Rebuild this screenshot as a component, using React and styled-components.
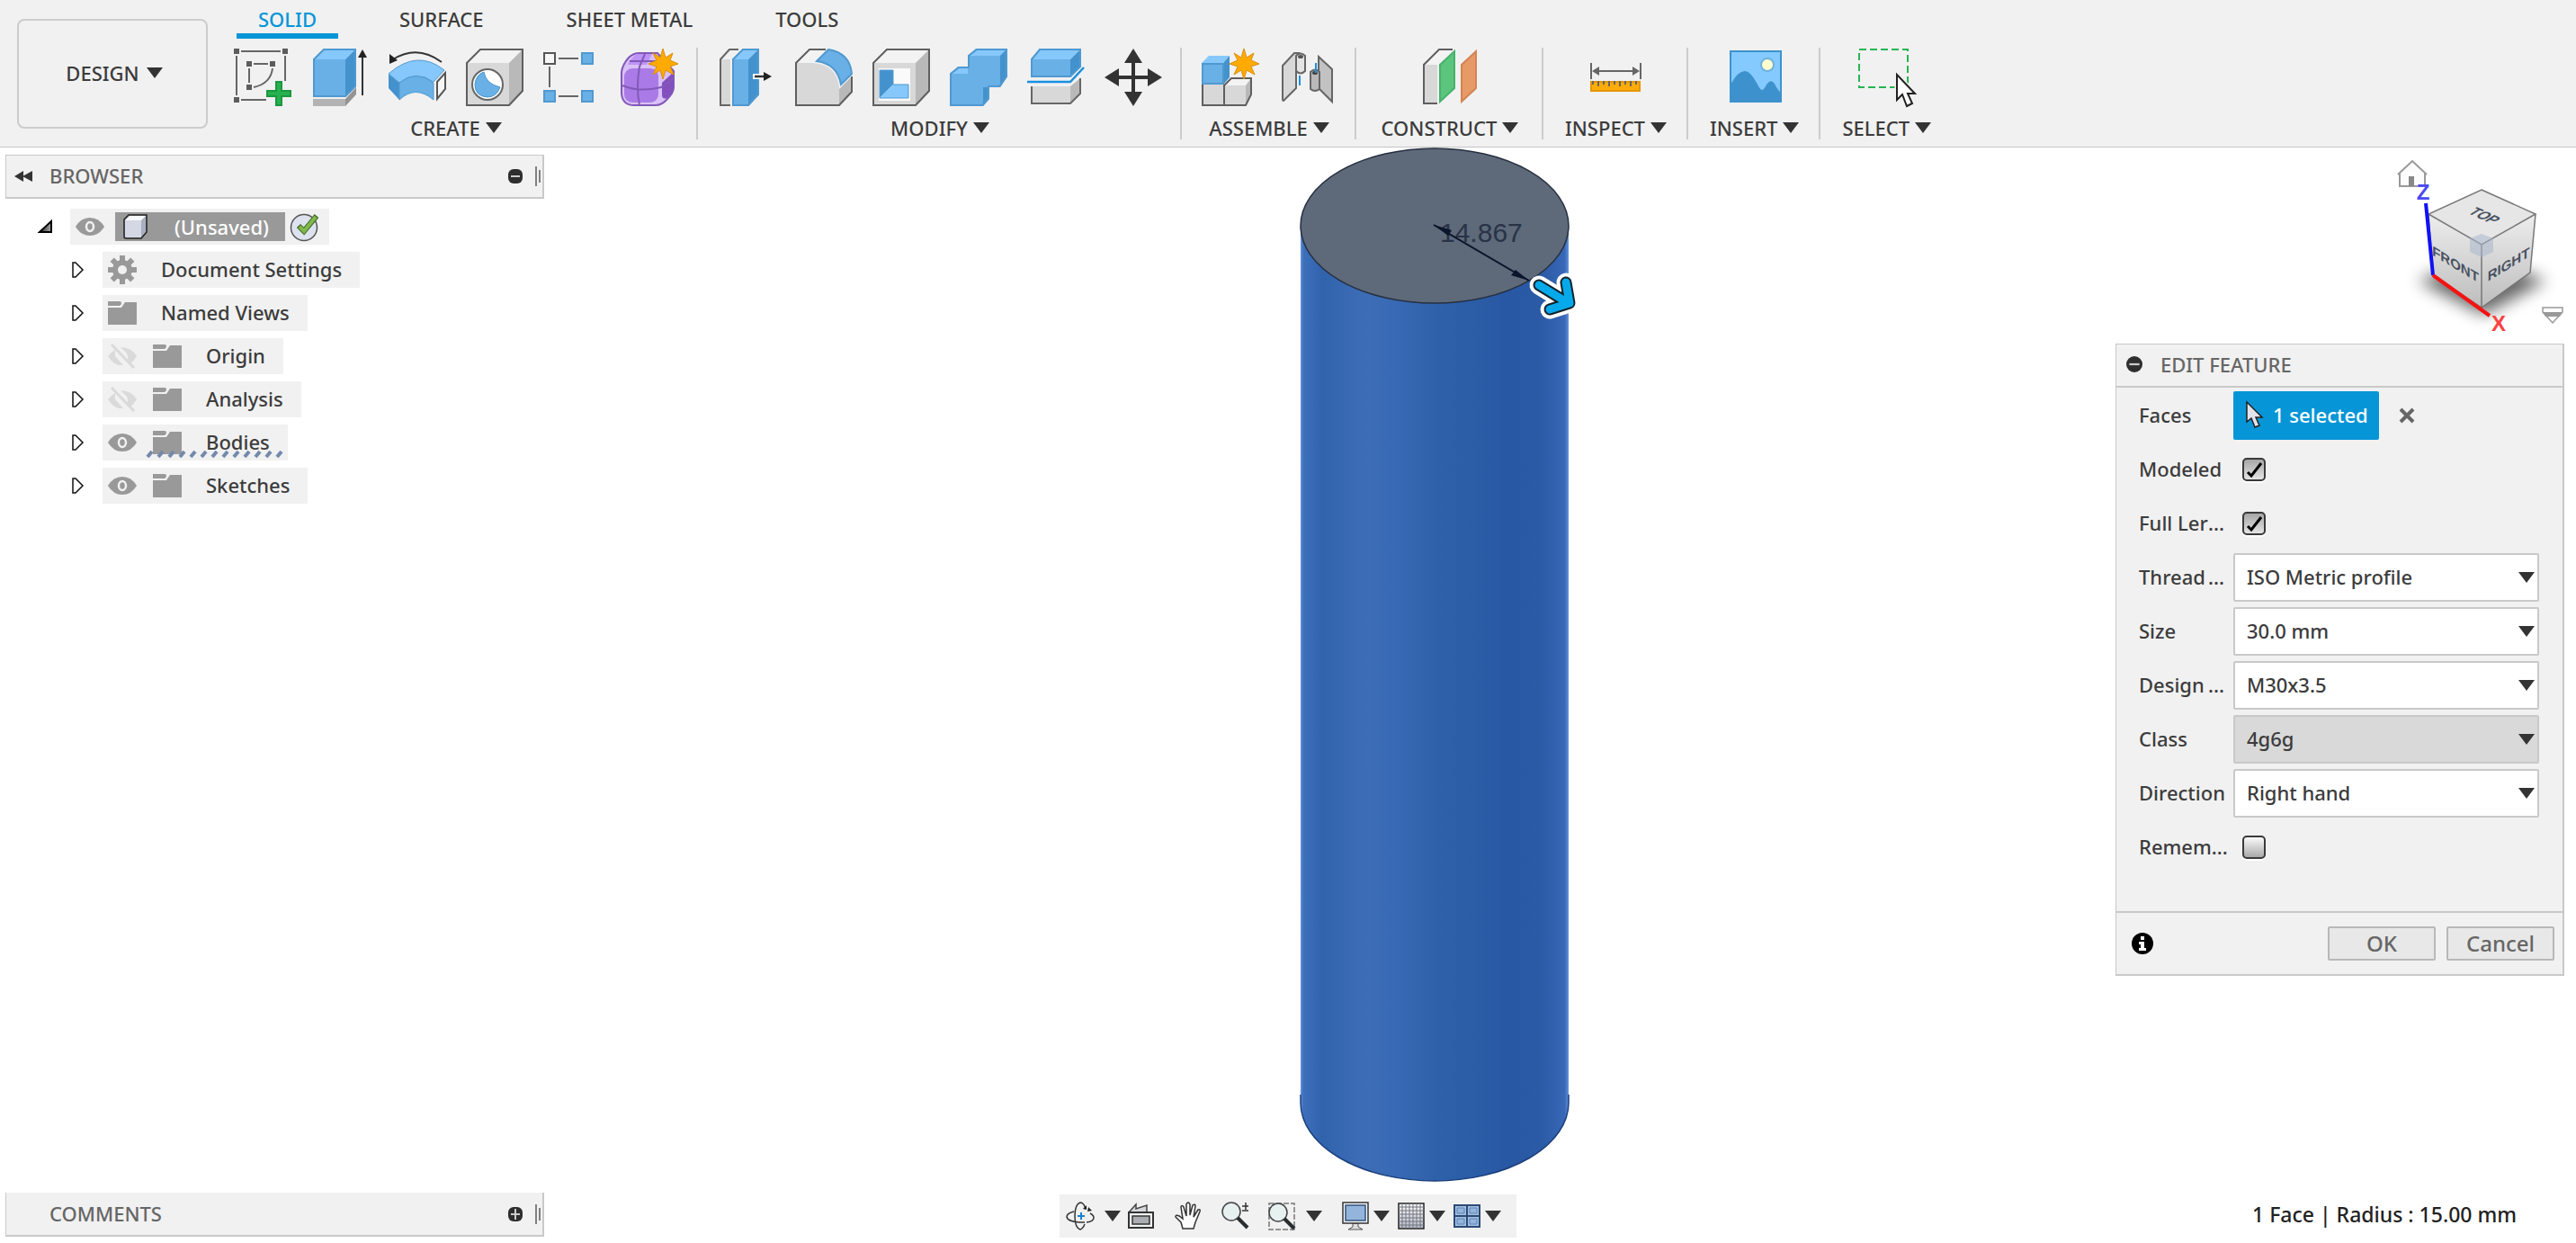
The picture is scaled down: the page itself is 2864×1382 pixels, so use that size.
import React from "react";
import styled, { createGlobalStyle } from "styled-components";

const GlobalStyle = createGlobalStyle`
  * {
    box-sizing: border-box;
  }
  body {
    margin: 0;
    background: #fff;
    color: #3c3c3c;
    font-family: "Noto Sans", "Open Sans", sans-serif;
    font-size: 22px;
    font-weight: 500;
    line-height: 28px;
  }
  button, select, input {
    margin: 0;
    padding: 0;
    color: inherit;
    font: inherit;
  }
  svg {
    display: block;
    overflow: visible;
    flex: none;
  }
`;

const Page = styled.div`
  display: flex;
  flex-direction: column;
  min-height: 100vh;
`;

/* toolbar */

const Toolbar = styled.header`
  display: flex;
  background: #f1f1f1;
  border-bottom: 1px solid #c4c4c4;
`;

const DesignButton = styled.button`
  display: flex;
  align-items: center;
  justify-content: center;
  gap: 8px;
  width: 212px;
  height: 122px;
  margin: 21px 7px 0 19px;
  padding: 0 0 2px 4px;
  background: transparent;
  border: 2px solid #ccc;
  border-radius: 8px;
`;

const Ribbon = styled.div`
  display: flex;
  flex-direction: column;
  padding-bottom: 8px;
`;

const Tabs = styled.nav`
  display: flex;
  gap: 44px;
  padding-left: 25px;
`;

const Tab = styled.button`
  padding: 6px 24px 0;
  line-height: 31px;
  background: transparent;
  border: 0;
  border-bottom: 6px solid ${props => (props.$active ? "#0696d7" : "transparent")};
  color: ${props => (props.$active ? "#0696d7" : "#3c3c3c")};
`;

const Groups = styled.div`
  display: flex;
  margin-top: 10px;
`;

const Group = styled.section`
  display: flex;
  flex-direction: column;
  align-items: center;
  min-width: ${props => props.$min || 0}px;
  padding: 1px 20px 0 22px;
  border-right: 2px solid #ccc;

  &:last-child {
    border-right: 0;
  }
`;

const GroupIcons = styled.div`
  display: flex;
  gap: 22px;
`;

const PlainButton = styled.button`
  display: flex;
  background: transparent;
  border: 0;
`;

const GroupLabel = styled.button`
  display: flex;
  align-items: center;
  gap: 6px;
  margin-top: 11px;
  padding: 0 2px;
  line-height: 26px;
  background: transparent;
  border: 0;
`;

/* workspace */

const Workspace = styled.main`
  position: relative;
  isolation: isolate;
  flex: 1;
  display: grid;
  grid-template-columns: 1fr auto 1fr;
`;

const Viewport = styled.svg`
  position: absolute;
  inset: 0;
  z-index: -1;
  width: 100%;
  height: 100%;
`;

const LeftColumn = styled.div`
  display: flex;
  flex-direction: column;
  justify-content: space-between;
  width: 605px;
  padding: 8px 0 7px 6px;
`;

const PanelHeader = styled.div`
  display: flex;
  align-items: center;
  height: 49px;
  padding: 0 2px 0 9px;
  background: #f1f1f1;
  border: solid #c9c9c9;
  border-width: ${props => (props.$open ? "0" : "1px")} 2px 2px 1px;
  color: #666;
`;

const PanelTitle = styled.span`
  flex: 1;
  margin-left: ${props => (props.$indent ? "39px" : "19px")};
  padding-bottom: 2px;
`;

const Grip = styled.span`
  display: flex;
  align-items: center;
  gap: 2px;
  margin-left: 14px;

  &::before, &::after {
    content: "";
    width: 2px;
    height: 22px;
    background: #808080;
  }
  &::after {
    height: 14px;
  }
`;

const Tree = styled.ul`
  display: flex;
  flex-direction: column;
  gap: 8px;
  margin: 11px 0 0;
  padding: 0;
  list-style: none;
`;

const TreeRow = styled.li`
  display: flex;
  align-items: center;
  gap: 20px;
  height: 40px;
  padding-left: ${props => (props.$root ? "37px" : "74px")};
`;

const TreeNode = styled.div`
  position: relative;
  display: flex;
  align-items: center;
  height: 40px;
  padding: 0 20px 0 6px;
  background: #f1f1f1;
`;

const TreeName = styled.span`
  margin-left: 27px;
  padding-bottom: 2px;
`;

const FolderSlot = styled.span`
  margin-left: ${props => (props.$first ? "0" : "18px")};
`;

const Hatch = styled.svg`
  position: absolute;
  left: 48px;
  bottom: 3px;
`;

const RootNode = styled(TreeNode)`
  padding-right: 12px;
`;

const RootName = styled.span`
  display: flex;
  align-items: center;
  gap: 30px;
  height: 32px;
  margin: 0 5px 0 12px;
  padding: 0 18px 0 9px;
  background: #999;
  color: #fff;
`;

const NavBar = styled.nav`
  align-self: end;
  display: flex;
  align-items: center;
  height: 48px;
  margin-bottom: 6px;
  padding: 0 17px 0 8px;
  background: #f1f1f1;
`;

const NavButton = styled(PlainButton)`
  margin-left: ${props => props.$gap || 0}px;
`;

const RightColumn = styled.div`
  display: flex;
  flex-direction: column;
  align-items: flex-end;
  padding: 8px 13px 18px 0;
`;

const CubeSlot = styled.div`
  margin: 0 -9px 10px 0;
`;

const Status = styled.p`
  margin: auto 53px 0 0;
  color: #222;
  font-size: 23px;
`;

/* edit feature dialog */

const Dialog = styled.form`
  width: 499px;
  background: #f1f1f1;
  border: 2px solid #c9c9c9;
  border-left-width: 1px;
  border-top-width: 1px;
`;

const DialogHeader = styled.header`
  display: flex;
  align-items: center;
  gap: 20px;
  height: 48px;
  padding: 0 0 2px 11px;
  border-bottom: 2px solid #c9c9c9;
  color: #666;
`;

const Fields = styled.div`
  display: grid;
  grid-auto-rows: 54px;
  gap: 6px;
  padding: 4px 26px 44px 25px;
`;

const Field = styled.div`
  display: grid;
  grid-template-columns: 105px 1fr;
  align-items: center;
`;

const FieldLabel = styled.label`
  display: flex;
  padding-bottom: 2px;
  white-space: nowrap;
`;

const ShortText = styled.span`
  min-width: 77px;
`;

const Selection = styled.div`
  display: flex;
  align-items: center;
  gap: 22px;
`;

const SelectionButton = styled.button`
  display: flex;
  align-items: center;
  gap: 12px;
  height: 54px;
  padding: 0 12px 2px 14px;
  background: #0696d7;
  border: 0;
  border-radius: 2px;
  color: #fff;
`;

const Overlay = styled.div`
  display: grid;
  align-items: center;

  > * {
    grid-area: 1 / 1;
  }
  > svg {
    pointer-events: none;
  }
`;

const SelectOverlay = styled(Overlay)`
  > svg {
    justify-self: end;
    margin-right: 5px;
  }
`;

const Select = styled.select`
  appearance: none;
  width: 100%;
  height: 54px;
  padding: 0 28px 2px 13px;
  background: ${props => (props.disabled ? "#d9d9d9" : "#fff")};
  border: 2px solid #c9c9c9;
  border-radius: 2px;
  opacity: 1;
`;

const CheckOverlay = styled(Overlay)`
  justify-content: start;
  margin-left: 10px;
`;

const Checkbox = styled.input`
  appearance: none;
  width: 26px;
  height: 26px;
  background: linear-gradient(#fafafa, #a9a9a9);
  border: 2px solid #3a3a3a;
  border-radius: 5px;
  box-shadow: 0 2px 0 #fff;

  &:checked {
    background: linear-gradient(#a6a6a6, #e4e4e4);
  }
`;

const DialogFooter = styled.footer`
  display: flex;
  align-items: center;
  gap: 12px;
  height: 70px;
  padding: 0 9px 0 17px;
  border-top: 2px solid #c9c9c9;
`;

const InfoSlot = styled.span`
  flex: 1;
`;

const ActionButton = styled.button`
  width: 120px;
  height: 38px;
  background: #e8e8e8;
  border: 2px solid #b8b8b8;
  border-radius: 2px;
  color: #666;
  font-size: 24px;
  line-height: 32px;
`;

/* small marks */

const Caret = () => (
  <svg width="18" height="12" viewBox="0 0 18 12">
    <path d="M0 0h18L9 12z" fill="#333" />
  </svg>
);

const RoundMark = ({ plus, size = 16 }) => (
  <svg width={size} height={size} viewBox="0 0 16 16">
    <rect width="16" height="16" rx={size > 16 ? 8 : 6} fill="#2e2e2e" />
    <path d={plus ? "M3 8h10M8 2v12" : "M3 8h10"} stroke="#ccc" strokeWidth="2" />
  </svg>
);

const Rewind = () => (
  <svg width="20" height="12" viewBox="0 0 20 12">
    <path d="M0 6l10-6v12zM9 6l11-6v12z" fill="#333" />
  </svg>
);

const Eye = ({ off }) => (
  <svg width="32" height="26" viewBox="0 0 32 26">
    {off ? (
      <g fill="none" stroke="#dadada">
        <path d="M8 6Q3 9 0 13q5 8 12 10h5L8 13z" fill="#dadada" stroke="none" />
        <path d="M14 3q12 0 18 10-3 5-7 8l-3-4q1-7-4-10z" fill="#dadada" stroke="none" />
        <path d="M4 0l25 26" strokeWidth="3" />
      </g>
    ) : (
      <g>
        <path d="M0 13Q6 3 16 3t16 10q-6 10-16 10T0 13z" fill="#999" />
        <ellipse cx="16" cy="13" rx="4" ry="5" fill="none" stroke="#f1f1f1" strokeWidth="2.500" />
      </g>
    )}
  </svg>
);

const Folder = () => (
  <svg width="32" height="26" viewBox="0 0 32 26">
    <path d="M0 0h13q2 0 2 2t-2 3H0zM0 7h15l4-6h13v25H0z" fill="#999" />
  </svg>
);

const Gear = () => (
  <svg width="32" height="32" viewBox="0 0 32 32">
    <g fill="#999">
      {[0, 45, 90, 135].map(angle => (
        <rect key={angle} x="13" y="0" width="6" height="32" transform={`rotate(${angle} 16 16)`} />
      ))}
      <circle cx="16" cy="16" r="11" />
    </g>
    <circle cx="16" cy="16" r="5" fill="#f1f1f1" />
  </svg>
);

const Expander = () => (
  <svg width="14" height="18" viewBox="0 0 14 18">
    <path d="M1 1h3l8 8-8 8H1z" fill="#fff" stroke="#111" strokeWidth="1.500" />
  </svg>
);

const Collapser = () => (
  <svg width="15" height="14" viewBox="0 0 15 14">
    <defs>
      <linearGradient id="collapse">
        <stop stopColor="#222" />
        <stop offset="1" stopColor="#aaa" />
      </linearGradient>
    </defs>
    <path d="M1 13L14 1v12z" fill="url(#collapse)" stroke="#000" strokeWidth="2" />
  </svg>
);

const Component = () => (
  <svg width="27" height="28" viewBox="0 0 27 28">
    <path d="M1 6l5-5h20v19l-6 7H3q-2 0-2-2z" fill="#aab0c0" stroke="#222" strokeWidth="1.500" />
    <path d="M2 7h18v19H4q-2 0-2-2z" fill="#d4d8e4" />
    <path d="M2 7l5-5h18l-5 5z" fill="#f8f9fc" />
  </svg>
);

const Saved = () => (
  <svg width="32" height="32" viewBox="0 0 32 32">
    <circle cx="16" cy="17" r="14.500" fill="#dde2ee" stroke="#555" strokeWidth="1.500" />
    <path d="M10 15l6 6L30 4" fill="none" stroke="#3f6b25" strokeWidth="6" />
    <path d="M11 16l5 5L29 5" fill="none" stroke="#82b84c" strokeWidth="4" />
  </svg>
);

/* toolbar icons */

const Icon = ({ children }) => (
  <svg width="64" height="64" viewBox="0 0 64 64" fill="none">
    {children}
  </svg>
);

const Star = () => (
  <path
    d="M47 0l3 10 8-5-3 8 9 4-9 3 4 9-9-5-3 10-3-10-8 5 4-9-9-3 9-4-4-8 8 5z"
    fill="#ffaa00"
    stroke="#d98f0c"
  />
);

const SketchIcon = () => (
  <Icon>
    <path d="M0 0h6v6H0zM54 0h6v6h-6zM0 54h6v6H0zM14 14h6v6h-6zM40 14h6v6h-6zM14 40h6v6h-6z" fill="#5c5c5c" />
    <path d="M8 3h44M3 8v44M57 8v28M8 57h28M22 17h16M17 22v16M43 22Q41 39 22 43" stroke="#666" strokeWidth="2" />
    <path d="M47 37h6v10h10v6H53v10h-6V53H37v-6h10z" fill="#27b14f" stroke="#1c9740" strokeWidth="2" />
  </Icon>
);

const ExtrudeIcon = () => (
  <Icon>
    <path d="M2 56h36v8H2z" fill="#b3b3b3" />
    <path d="M38 56l12-13v8L38 64z" fill="#949494" />
    <path d="M2 12L14 0h36L38 12z" fill="#86c8fb" />
    <path d="M38 12L50 0v42L38 54z" fill="#4492cd" />
    <path d="M2 12h36v42H2z" fill="#69b0e6" />
    <path d="M3 12L14 1h35v41L38 53H3z" stroke="#5099d0" strokeWidth="2" />
    <path d="M57 52V8" stroke="#333" strokeWidth="2" />
    <path d="M57 1l5 9H52z" fill="#222" />
  </Icon>
);

const RevolveIcon = () => (
  <Icon>
    <path d="M0 28l12 10v19L0 44z" fill="#4492cd" />
    <path d="M0 28Q32 0 62 24L50 37q-20-14-38 1z" fill="#86c8fb" stroke="#5099d0" />
    <path d="M12 38q18-15 38 0v19q-20-17-38 0z" fill="#69b0e6" stroke="#5099d0" />
    <path d="M54 37l9-10v18l-9 11z" fill="#f6f6f6" stroke="#555" strokeWidth="2" />
    <path d="M59 15Q32-5 5 12" stroke="#333" strokeWidth="2" />
    <path d="M1 17V6l9 7z" fill="#222" />
  </Icon>
);

const GreyCube = () => (
  <g>
    <path d="M1 16L16 1h47L48 16z" fill="#f3f3f3" />
    <path d="M48 16L63 1v46L48 63z" fill="#b9b9b9" />
    <path d="M1 16h47v47H1z" fill="#d8d8d8" />
    <path d="M1 16L16 1h47v46L48 63H1z" stroke="#5f5f5f" strokeWidth="2" />
  </g>
);

const HoleIcon = () => (
  <Icon>
    <GreyCube />
    <circle cx="24" cy="40" r="17" fill="#fff" stroke="#666" strokeWidth="2" />
    <path d="M20 26q2 13 18 17-4 11-14 11-14-1-14-14 1-11 10-14z" fill="#69b0e6" stroke="#4b94cb" />
  </Icon>
);

const PatternIcon = () => (
  <Icon>
    <path d="M1 5h12v12H1z" fill="#f6f6f6" stroke="#555" strokeWidth="2" />
    <path d="M43 5h12v12H43zM1 47h12v12H1zM43 47h12v12H43z" fill="#69b0e6" stroke="#5099d0" strokeWidth="2" />
    <path d="M17 11h22M7 20v23M17 53h22" stroke="#666" strokeWidth="2" />
  </Icon>
);

const FormIcon = () => (
  <Icon>
    <path d="M1 26Q2 18 9 10q5-5 12-5h20l18 20v18q0 6-7 13-6 7-13 7H15Q2 63 1 50z" fill="#d9c0f6" stroke="#8259b8" strokeWidth="2" />
    <path d="M9 15l8-9h18l-6 12H8z" fill="#be93f8" />
    <rect x="4" y="22" width="38" height="38" rx="9" fill="#aa7be6" />
    <path d="M46 38l13-12v18q0 6-7 11-6 2-6-4z" fill="#8450bd" />
    <path d="M2 41q18 8 43 2 8-4 14-10M21 63q-4-20 0-43l6-14M10 14h30" stroke="#8259b8" strokeWidth="2" />
    <Star />
  </Icon>
);

const PressPullIcon = () => (
  <Icon>
    <path d="M14 12H3v51h11z" fill="#d8d8d8" />
    <path d="M14 63H3V12L13 1h10" stroke="#666" strokeWidth="2" />
    <path d="M16 12L28 0h18L34 12z" fill="#86c8fb" />
    <path d="M34 12L46 0v51L34 64z" fill="#4492cd" />
    <path d="M16 12h18v52H16z" fill="#69b0e6" />
    <path d="M17 12L28 1h17v50L34 63H17z" stroke="#5099d0" strokeWidth="2" />
    <path d="M39 31h14" stroke="#fff" strokeWidth="6" />
    <path d="M41 31h12" stroke="#333" strokeWidth="2.500" />
    <path d="M60 31l-9-5v10z" fill="#222" />
  </Icon>
);

const FilletIcon = () => (
  <Icon>
    <path d="M1 16L16 1h18L22 16z" fill="#f3f3f3" />
    <path d="M1 16h19q27 2 29 28v19H1z" fill="#d8d8d8" />
    <path d="M49 45l14-14v17L49 63z" fill="#b9b9b9" />
    <path d="M34 1H16L1 16v47h48l14-15V31" stroke="#5f5f5f" strokeWidth="2" />
    <path d="M24 14L37 1q24 4 26 27L51 40Q47 17 24 14z" fill="#69b0e6" stroke="#5099d0" strokeWidth="2" />
  </Icon>
);

const ShellIcon = () => (
  <Icon>
    <GreyCube />
    <path d="M7 22h35v36H7z" fill="#fafafa" />
    <path d="M8 24h15v16L8 55z" fill="#4492cd" />
    <path d="M23 40h17v15H8z" fill="#86c8fb" />
    <path d="M23 24H8v31h32V40H23z" stroke="#5099d0" />
  </Icon>
);

const CombineIcon = () => (
  <Icon>
    <path d="M0 28l9-8h11V8l9-8h35v31L56 43H44v13l-7 8H0z" fill="#69b0e6" />
    <path d="M0 28l9-8h11v8zM20 8l9-8h35l-8 8z" fill="#86c8fb" />
    <path d="M56 8l8-8v31l-8 12zM37 43h7v13l-7 8z" fill="#4492cd" />
    <path d="M1 28l9-7h11V8l9-7h33v30l-8 11H43v13l-7 8H1z" stroke="#5099d0" strokeWidth="2" />
  </Icon>
);

const SplitIcon = () => (
  <Icon>
    <path d="M4 12L14 0h46L48 12z" fill="#86c8fb" />
    <path d="M48 12L60 0v20L48 32z" fill="#4492cd" />
    <path d="M4 12h44v20H4z" fill="#69b0e6" />
    <path d="M5 12L14 1h45v19L48 31H5z" stroke="#5099d0" strokeWidth="2" />
    <path d="M0 37h48l15-16" stroke="#1a90de" strokeWidth="2.500" />
    <path d="M5 42h43v19H5z" fill="#d8d8d8" />
    <path d="M48 42l11-9v17L48 61z" fill="#b9b9b9" />
    <path d="M5 42v19h43l11-11V33" stroke="#666" strokeWidth="2" />
  </Icon>
);

const MoveIcon = () => (
  <Icon>
    <path d="M32 10v44M10 32h44" stroke="#333" strokeWidth="4" />
    <path d="M32 0l10 16H22zM32 64l10-16H22zM0 32l16-10v20zM64 32L48 22v20z" fill="#333" />
  </Icon>
);

const ComponentIcon = () => (
  <Icon>
    <path d="M1 40h48v23H1z" fill="#d8d8d8" />
    <path d="M25 41l8-8h22l-6 8z" fill="#f3f3f3" />
    <path d="M49 41l6-8v18l-6 12z" fill="#b9b9b9" />
    <path d="M1 40v23h48l6-12V33H33l-8 8v22" stroke="#5f5f5f" strokeWidth="2" />
    <path d="M0 16l8-8h23l-7 8z" fill="#86c8fb" />
    <path d="M24 16l7-8v24l-7 8z" fill="#4492cd" />
    <path d="M1 17h23v22H1z" fill="#69b0e6" stroke="#5099d0" strokeWidth="2" />
    <Star />
  </Icon>
);

const JointIcon = () => (
  <Icon>
    <path d="M4 19L17 5h5l-3 6v33L5 58q-1 0-1-2z" fill="#d8d8d8" stroke="#666" strokeWidth="2" />
    <path d="M19 8q5-5 10 0v17q-5 5-10 0z" fill="#e4e4e4" stroke="#666" strokeWidth="2" />
    <ellipse cx="24" cy="9" rx="3" ry="2" fill="#555" />
    <path d="M23 30v11" stroke="#1a90de" strokeWidth="2" />
    <path d="M44 9l15 14v36L44 44z" fill="#c2c2c2" stroke="#666" strokeWidth="2" />
    <path d="M35 26q5-5 10 0v19q-5 4-10 0z" fill="#b9b9b9" stroke="#666" strokeWidth="2" />
    <ellipse cx="40" cy="27" rx="3" ry="2" fill="#444" />
    <path d="M41 16v11" stroke="#1a90de" strokeWidth="2" />
  </Icon>
);

const ConstructIcon = () => (
  <Icon>
    <path d="M3 18L20 1h15L19 18z" fill="#f3f3f3" />
    <path d="M3 18h15v43H3z" fill="#d8d8d8" />
    <path d="M18 61H3V18L20 1h15" stroke="#5f5f5f" strokeWidth="2" />
    <path d="M21 18L37 3v41L21 59z" fill="#5bc57e" stroke="#48b16c" strokeWidth="2" />
    <path d="M45 18L61 3v41L45 59z" fill="#e79a66" stroke="#d18553" strokeWidth="2" />
  </Icon>
);

const InspectIcon = () => (
  <Icon>
    <path d="M5 16v18M60 16v18M12 25h42" stroke="#666" strokeWidth="2" />
    <path d="M6 25l8-5v10zM59 25l-8-5v10z" fill="#666" />
    <path d="M5 37h54v10H5z" fill="#ffab0a" stroke="#e69500" strokeWidth="2" />
    <path d="M7 36v4M13 36v6M19 36v4M25 36v6M31 36v4M37 36v6M43 36v4M49 36v6M55 36v4" stroke="#666" strokeWidth="2" />
  </Icon>
);

const InsertIcon = () => (
  <Icon>
    <path d="M5 3h56v56H5z" fill="#85caff" />
    <path d="M5 40q8-15 16-15 6 0 13 13 4 8 6 8t5-6q6-9 11 3l5 7v10H5z" fill="#3d92cd" />
    <path d="M5 3h56v56H5z" stroke="#3d92cd" strokeWidth="2" />
    <circle cx="46" cy="18" r="7" fill="#ffffcf" stroke="#6fb0dd" strokeWidth="2" />
  </Icon>
);

const SelectIcon = () => (
  <Icon>
    <path d="M1 1h54v42H1z" stroke="#27b552" strokeWidth="2" strokeDasharray="8 4" />
    <path d="M43 29v28l6-6 5 13 6-3-5-11h8z" fill="#fff" stroke="#f1f1f1" strokeWidth="5" />
    <path d="M43 29v28l6-6 5 13 6-3-5-11h8z" fill="#fff" stroke="#222" strokeWidth="2" />
  </Icon>
);

/* navigation icons */

const NavIcon = ({ children }) => (
  <svg width="30" height="32" viewBox="0 0 30 32" fill="none">
    {children}
  </svg>
);

const OrbitIcon = () => (
  <NavIcon>
    <path d="M8 11q-8 2-8 6 1 5 14 6h6M26 13q4 2 4 5 0 4-8 5" stroke="#333" strokeWidth="1.500" />
    <path d="M21 8Q19 1 15 1 9 3 9 16t6 15q3-1 5-6" stroke="#333" strokeWidth="1.500" />
    <path d="M16 12v8M12 16h8" stroke="#1a80d0" strokeWidth="2" />
    <path d="M18 8l4-4v5zM23 11l1-5 4 4z" fill="#222" />
  </NavIcon>
);

const LookAtIcon = () => (
  <NavIcon>
    <path d="M1 12l8-9v5l12-4v8" fill="#d6d9dc" stroke="#444" strokeWidth="1.500" />
    <path d="M1 12h27v17H1z" fill="#f2f4f6" stroke="#333" strokeWidth="2" />
    <path d="M5 16h19v9H5z" fill="#aaadb2" stroke="#333" strokeWidth="1.500" />
  </NavIcon>
);

const HandIcon = () => (
  <NavIcon>
    <path
      d="M9 30l-2-7-6-6q0-3 4-1l4 3-2-13q1-3 3 0l3 10V3q2-4 4 0v12l3-11q3-2 3 1l-2 12 5-8q3-1 2 2l-5 12-2 7z"
      fill="#fcfcfc"
      stroke="#333"
      strokeWidth="1.500"
    />
  </NavIcon>
);

const ZoomIcon = () => (
  <NavIcon>
    <circle cx="11" cy="11" r="10" fill="#e6f1f0" stroke="#444" strokeWidth="1.500" />
    <path d="M18 18l11 11" stroke="#2a2d30" strokeWidth="4" />
    <path d="M23 5h7M27 1v8M23 10h7" stroke="#333" strokeWidth="1.500" />
  </NavIcon>
);

const FitIcon = () => (
  <NavIcon>
    <path d="M1 2h28v29H1z" stroke="#777" strokeWidth="1.500" strokeDasharray="6 2" />
    <circle cx="11" cy="12" r="10" fill="#e6f1f0" stroke="#444" strokeWidth="1.500" />
    <path d="M18 19l11 11" stroke="#2a2d30" strokeWidth="4" />
  </NavIcon>
);

const DisplayIcon = () => (
  <NavIcon>
    <path d="M12 24h6v4l5 3H7l5-3z" fill="#ddd" stroke="#555" />
    <path d="M1 1h28v23H1z" fill="#f8f9fb" stroke="#333" strokeWidth="1.500" />
    <path d="M4 4h22v17H4z" fill="#93b5dc" stroke="#33517b" strokeWidth="1.500" />
  </NavIcon>
);

const GridIcon = () => (
  <NavIcon>
    <defs>
      <linearGradient id="gridFill" x2="0" y2="1">
        <stop stopColor="#fff" />
        <stop offset="1" stopColor="#b4b8c6" />
      </linearGradient>
    </defs>
    <path d="M1 2h28v28H1z" fill="url(#gridFill)" stroke="#222" strokeWidth="1.500" />
    <path d="M5 2v28M9 2v28M13 2v28M17 2v28M21 2v28M25 2v28M1 6h28M1 10h28M1 14h28M1 18h28M1 22h28M1 26h28" stroke="#70747c" />
  </NavIcon>
);

const LayoutIcon = () => (
  <NavIcon>
    <path d="M1 4h28v24H1z" fill="#a4c1e2" stroke="#2c4a75" strokeWidth="2" />
    <path d="M15 4v24M1 16h28" stroke="#2c4a75" strokeWidth="2" />
    <path d="M4 7h8v6H4zM18 7h8v6h-8zM4 19h8v6H4zM18 19h8v6h-8z" fill="#93b5dc" stroke="#5d83b4" />
  </NavIcon>
);

/* dialog icons */

const Pointer = () => (
  <svg width="18" height="30" viewBox="0 0 18 30">
    <path d="M1 1v22l5-4 4 10 5-2-4-9h7z" fill="#e2e4ec" stroke="#222" strokeWidth="1.500" />
  </svg>
);

const Cross = () => (
  <svg width="18" height="18" viewBox="0 0 18 18">
    <path d="M2 2l14 14M16 2L2 16" stroke="#666" strokeWidth="4" />
  </svg>
);

const Tick = () => (
  <svg width="26" height="26" viewBox="0 0 26 26">
    <path d="M6 16l4 4L21 6" fill="none" stroke="#000" strokeWidth="3" />
  </svg>
);

const Info = () => (
  <svg width="24" height="24" viewBox="0 0 24 24">
    <circle cx="12" cy="12" r="12" fill="#000" />
    <path d="M10 4h4v4h-4zM8 10h6v7h2v3H8v-3h2v-4H8z" fill="#fff" />
  </svg>
);

/* drawings on the canvas */

const Model = () => (
  <Viewport viewBox="0 164 2864 1218" fill="none">
    <defs>
      <linearGradient id="side">
        <stop stopColor="#6592dc" />
        <stop offset="0.010" stopColor="#3d70bb" />
        <stop offset="0.080" stopColor="#3163ad" />
        <stop offset="0.240" stopColor="#3d6db6" />
        <stop offset="0.360" stopColor="#3869b4" />
        <stop offset="0.500" stopColor="#2f61aa" />
        <stop offset="0.780" stopColor="#2858a3" />
        <stop offset="0.900" stopColor="#2b5ba6" />
        <stop offset="0.985" stopColor="#3868b6" />
        <stop offset="1" stopColor="#6592dc" />
      </linearGradient>
    </defs>
    <path d="M1446 251V1226A149 87 0 0 0 1744 1226V251z" fill="url(#side)" />
    <path d="M1446 1217v9A149 87 0 0 0 1744 1226v-9" stroke="#1b3f7c" strokeWidth="1.500" />
    <ellipse cx="1595" cy="251" rx="149" ry="86" fill="#5e6979" stroke="#263040" strokeWidth="1.500" />
    <text x="1601" y="269" fill="#283347" fontFamily="Liberation Sans, sans-serif" fontSize="30" fontWeight="400">
      14.867
    </text>
    <path d="M1594 250l106 62" stroke="#0a142b" strokeWidth="2" />
    <path d="M1594 250l20 6-4 6zM1700 312l-20-6 5-6z" fill="#0a142b" />
    <g strokeLinecap="round" strokeLinejoin="round">
      <path d="M1711 317l31 19M1741 314l4 23-22 7" stroke="#fff" strokeWidth="21" />
      <path d="M1711 317l31 19M1741 314l4 23-22 7" stroke="#12222d" strokeWidth="13" />
      <path d="M1711 317l31 19M1741 314l4 23-22 7" stroke="#06a9ea" strokeWidth="9" />
    </g>
  </Viewport>
);

const ViewCube = () => (
  <svg width="200" height="200" viewBox="0 0 200 200" fill="none">
    <defs>
      <linearGradient id="face" x2="0" y2="1">
        <stop stopColor="#ededed" />
        <stop offset="1" stopColor="#bdbdbd" />
      </linearGradient>
      <filter id="soft" x="-50%" y="-50%" width="200%" height="200%">
        <feGaussianBlur stdDeviation="9" />
      </filter>
    </defs>
    <path d="M28 140l71-26 72 26-70 38z" fill="#000" opacity="0.600" filter="url(#soft)" />
    <path d="M8 20v15h28V20M6 22L22 7l16 15" fill="#fcfcfc" stroke="#999" strokeWidth="2" />
    <path d="M18 24h6v11h-6z" fill="#888" />
    <path d="M99 39l60 27-60 34-59-34z" fill="#e6e6e6" />
    <path d="M40 66l59 34v70l-54-36zM99 100l60-34-6 65-54 39z" fill="url(#face)" />
    <path d="M99 39l60 27-60 34-59-34zM99 100v70M159 66l-6 65-54 39-54-36-5-68" stroke="#777" strokeWidth="1.500" />
    <path d="M86 93l13-5 13 5v15l-13 6-13-6z" fill="#a8b6cc" opacity="0.550" />
    <g fill="#475060" fontFamily="Liberation Sans, sans-serif" fontSize="15" fontWeight="700" textAnchor="middle">
      <text transform="translate(97 71) rotate(24) skewX(-34)">TOP</text>
      <text transform="translate(70 127) skewY(31)">FRONT</text>
      <text transform="translate(129 127) skewY(-31)">RIGHT</text>
    </g>
    <path d="M37 54l8 80" stroke="#1111f5" strokeWidth="4" />
    <path d="M45 134l63 45" stroke="#f51212" strokeWidth="4" />
    <g fontFamily="Liberation Sans, sans-serif" fontSize="24" fontWeight="700" textAnchor="middle">
      <text x="34" y="50" fill="#4a4af5">Z</text>
      <text x="118" y="196" fill="#fb4343">X</text>
    </g>
    <path d="M167 170h22v5l-11 12-11-12z" fill="#fff" stroke="#999" strokeWidth="1.500" />
    <path d="M167 175h22l-3 5h-16z" fill="#999" />
  </svg>
);

const tabs = ["SOLID", "SURFACE", "SHEET METAL", "TOOLS"];

const groups = [
  {
    name: "CREATE",
    icons: [
      ["Create Sketch", SketchIcon],
      ["Extrude", ExtrudeIcon],
      ["Revolve", RevolveIcon],
      ["Hole", HoleIcon],
      ["Pattern", PatternIcon],
      ["Create Form", FormIcon]
    ]
  },
  {
    name: "MODIFY",
    icons: [
      ["Press Pull", PressPullIcon],
      ["Fillet", FilletIcon],
      ["Shell", ShellIcon],
      ["Combine", CombineIcon],
      ["Split Body", SplitIcon],
      ["Move", MoveIcon]
    ]
  },
  { name: "ASSEMBLE", icons: [["New Component", ComponentIcon], ["Joint", JointIcon]] },
  { name: "CONSTRUCT", min: 208, icons: [["Offset Plane", ConstructIcon]] },
  { name: "INSPECT", icons: [["Measure", InspectIcon]] },
  { name: "INSERT", icons: [["Insert Canvas", InsertIcon]] },
  { name: "SELECT", icons: [["Select", SelectIcon]] }
];

const nodes = [
  { name: "Document Settings", gear: true },
  { name: "Named Views" },
  { name: "Origin", eye: "off" },
  { name: "Analysis", eye: "off" },
  { name: "Bodies", eye: "on", hatch: true },
  { name: "Sketches", eye: "on" }
];

const navItems = [
  ["Orbit", OrbitIcon, 0],
  ["Orbit menu", Caret, 12],
  ["Look At", LookAtIcon, 8],
  ["Pan", HandIcon, 22],
  ["Zoom", ZoomIcon, 22],
  ["Fit", FitIcon, 22],
  ["Fit menu", Caret, 12],
  ["Display Settings", DisplayIcon, 22],
  ["Display menu", Caret, 5],
  ["Grid and Snaps", GridIcon, 9],
  ["Grid menu", Caret, 5],
  ["Viewports", LayoutIcon, 9],
  ["Viewports menu", Caret, 5]
];

const fields = [
  { id: "modeled", label: "Modeled", check: true, on: true },
  { id: "full", label: "Full Ler", short: true, check: true, on: true },
  { id: "thread", label: "Thread", short: true, value: "ISO Metric profile" },
  { id: "size", label: "Size", value: "30.0 mm" },
  { id: "designation", label: "Design", short: true, value: "M30x3.5" },
  { id: "class", label: "Class", value: "4g6g", disabled: true },
  { id: "direction", label: "Direction", value: "Right hand" },
  { id: "remember", label: "Remem", short: true, check: true, on: false }
];

const FormField = ({ field }) => (
  <Field>
    <FieldLabel htmlFor={field.id}>
      {field.short ? <ShortText>{field.label}</ShortText> : field.label}
      {field.short && "..."}
    </FieldLabel>
    {field.check ? (
      <CheckOverlay>
        <Checkbox id={field.id} type="checkbox" defaultChecked={field.on} />
        {field.on && <Tick />}
      </CheckOverlay>
    ) : (
      <SelectOverlay>
        <Select id={field.id} disabled={field.disabled}>
          <option>{field.value}</option>
        </Select>
        <Caret />
      </SelectOverlay>
    )}
  </Field>
);

const BrowserTree = () => (
  <Tree>
    <TreeRow $root>
      <PlainButton aria-label="Collapse">
        <Collapser />
      </PlainButton>
      <RootNode>
        <Eye />
        <RootName>
          <Component />
          (Unsaved)
        </RootName>
        <Saved />
      </RootNode>
    </TreeRow>
    {nodes.map(node => (
      <TreeRow key={node.name}>
        <PlainButton aria-label="Expand">
          <Expander />
        </PlainButton>
        <TreeNode>
          {node.gear && <Gear />}
          {node.eye && <Eye off={node.eye === "off"} />}
          {!node.gear && (
            <FolderSlot $first={!node.eye}>
              <Folder />
            </FolderSlot>
          )}
          <TreeName>{node.name}</TreeName>
          {node.hatch && (
            <Hatch width="154" height="8" viewBox="0 0 154 8">
              {Array.from({ length: 13 }, (_, i) => (
                <path key={i} d={`M${i * 12 + 2} 7l5-6`} stroke="#7389ab" strokeWidth="4" />
              ))}
            </Hatch>
          )}
        </TreeNode>
      </TreeRow>
    ))}
  </Tree>
);

const EditFeature = () => (
  <Dialog onSubmit={e => e.preventDefault()}>
    <DialogHeader>
      <RoundMark size={18} />
      EDIT FEATURE
    </DialogHeader>
    <Fields>
      <Field>
        <FieldLabel htmlFor="faces">Faces</FieldLabel>
        <Selection>
          <SelectionButton id="faces" type="button">
            <Pointer />
            1 selected
          </SelectionButton>
          <PlainButton type="button" aria-label="Clear selection">
            <Cross />
          </PlainButton>
        </Selection>
      </Field>
      {fields.map(field => (
        <FormField key={field.id} field={field} />
      ))}
    </Fields>
    <DialogFooter>
      <InfoSlot>
        <Info />
      </InfoSlot>
      <ActionButton type="submit">OK</ActionButton>
      <ActionButton type="button">Cancel</ActionButton>
    </DialogFooter>
  </Dialog>
);

const App = () => (
  <Page>
    <GlobalStyle />
    <Toolbar>
      <DesignButton>
        DESIGN
        <Caret />
      </DesignButton>
      <Ribbon>
        <Tabs>
          {tabs.map((tab, index) => (
            <Tab key={tab} $active={index === 0}>
              {tab}
            </Tab>
          ))}
        </Tabs>
        <Groups>
          {groups.map(group => (
            <Group key={group.name} $min={group.min}>
              <GroupIcons>
                {group.icons.map(([name, Drawing]) => (
                  <PlainButton key={name} aria-label={name}>
                    <Drawing />
                  </PlainButton>
                ))}
              </GroupIcons>
              <GroupLabel>
                {group.name}
                <Caret />
              </GroupLabel>
            </Group>
          ))}
        </Groups>
      </Ribbon>
    </Toolbar>
    <Workspace>
      <Model />
      <LeftColumn>
        <section>
          <PanelHeader>
            <Rewind />
            <PanelTitle>BROWSER</PanelTitle>
            <RoundMark />
            <Grip />
          </PanelHeader>
          <BrowserTree />
        </section>
        <PanelHeader $open>
          <PanelTitle $indent>COMMENTS</PanelTitle>
          <RoundMark plus />
          <Grip />
        </PanelHeader>
      </LeftColumn>
      <NavBar>
        {navItems.map(([name, Drawing, gap]) => (
          <NavButton key={name} aria-label={name} $gap={gap}>
            <Drawing />
          </NavButton>
        ))}
      </NavBar>
      <RightColumn>
        <CubeSlot>
          <ViewCube />
        </CubeSlot>
        <EditFeature />
        <Status>1 Face | Radius : 15.00 mm</Status>
      </RightColumn>
    </Workspace>
  </Page>
);

export default App;
